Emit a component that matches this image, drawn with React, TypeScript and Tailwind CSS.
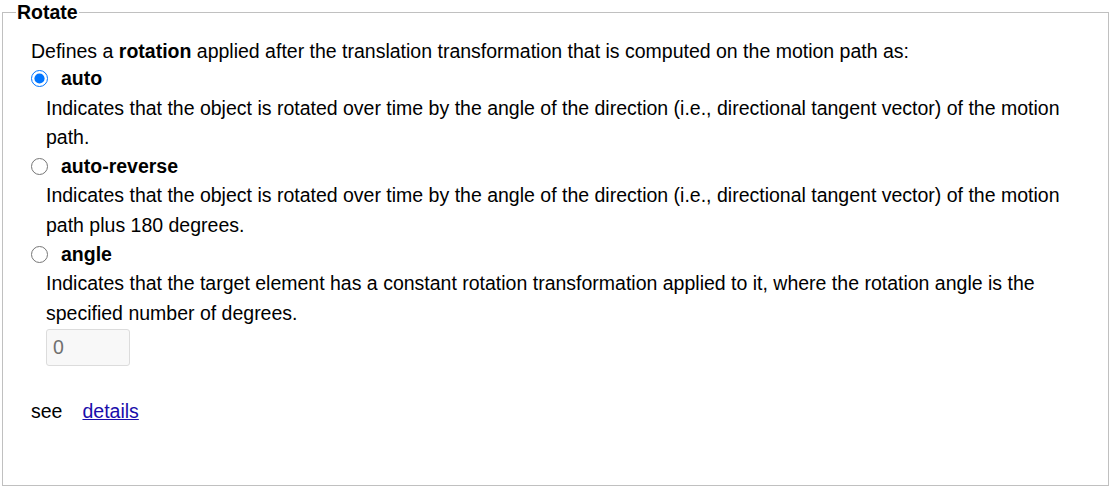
import React, { useState } from 'react';

interface OptionProps {
  value: string;
  label: string;
  checked: boolean;
  onSelect: (value: string) => void;
  children: React.ReactNode;
}

const Option: React.FC<OptionProps> = ({ value, label, checked, onSelect, children }) => (
  <div>
    <label className="flex items-center h-[29.3px] cursor-pointer">
      <input
        type="radio"
        name="rotate"
        value={value}
        checked={checked}
        onChange={() => onSelect(value)}
        className="w-[17px] h-[17px] m-0 accent-[#0075ff]"
      />
      <span className="ml-[13px] font-bold">{label}</span>
    </label>
    <p className="pl-[15px] pr-[40px]">{children}</p>
  </div>
);

export default function App() {
  const [mode, setMode] = useState('auto');
  const [angle, setAngle] = useState('0');

  return (
    <div className="pl-[2px] pr-[6px] pb-[6px] text-[19.5px] leading-[29.3px] text-black font-['Liberation_Sans',Arial,sans-serif]">
      <fieldset className="border border-[#c0c0c0] h-[486px] pl-[28px] pt-[13px]">
        <legend className="-ml-[15px] px-[1px] font-bold leading-[24px]">Rotate</legend>
        <p>
          Defines a <b>rotation</b> applied after the translation transformation that is computed on
          the motion path as:
        </p>
        <div className="-mt-[2px]">
          <Option value="auto" label="auto" checked={mode === 'auto'} onSelect={setMode}>
            Indicates that the object is rotated over time by the angle of the direction (i.e.,
            directional tangent vector) of the motion path.
          </Option>
          <Option value="auto-reverse" label="auto-reverse" checked={mode === 'auto-reverse'} onSelect={setMode}>
            Indicates that the object is rotated over time by the angle of the direction (i.e.,
            directional tangent vector) of the motion path plus 180 degrees.
          </Option>
          <Option value="angle" label="angle" checked={mode === 'angle'} onSelect={setMode}>
            Indicates that the target element has a constant rotation transformation applied to it,
            where the rotation angle is the specified number of degrees.
          </Option>
          <div className="pl-[15px] pt-[1px]">
            <input
              type="text"
              value={angle}
              onChange={(e) => setAngle(e.target.value)}
              disabled={mode !== 'angle'}
              className="w-[84px] h-[37px] px-[6px] border border-[#dcdcdc] rounded-[3px] bg-[#f8f8f8] text-[#707070] outline-none"
            />
          </div>
        </div>
        <p className="mt-[31px]">
          see
          <a href="#details" className="ml-[20px] text-[#1a0dab] underline">
            details
          </a>
        </p>
      </fieldset>
    </div>
  );
}
